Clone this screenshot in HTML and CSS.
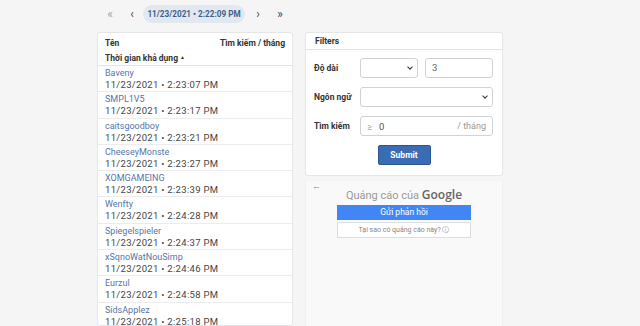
FILE: index.html
```html
<!DOCTYPE html>
<html lang="vi">
<head>
  <meta charset="UTF-8" />
  <title>Thời gian khả dụng</title>
  <link rel="stylesheet" href="styles.css">
</head>
<body>
  <nav class="pager">
    <span class="nav-arrow muted">&laquo;</span>
    <span class="nav-arrow">&lsaquo;</span>
    <span class="current">11/23/2021 • 2:22:09 PM</span>
    <span class="nav-arrow">&rsaquo;</span>
    <span class="nav-arrow">&raquo;</span>
  </nav>

  <div class="layout">
    <section class="card list">
      <div class="list-head">
        <div class="head-row">
          <span>Tên</span>
          <span>Tìm kiếm / tháng</span>
        </div>
        <div class="head-row">
          <span>Thời gian khả dụng <span class="caret">&#9650;</span></span>
        </div>
      </div>
      <div class="item"><a>Baveny</a><span>11/23/2021 • 2:23:07 PM</span></div>
      <div class="item"><a>SMPL1V5</a><span>11/23/2021 • 2:23:17 PM</span></div>
      <div class="item"><a>caitsgoodboy</a><span>11/23/2021 • 2:23:21 PM</span></div>
      <div class="item"><a>CheeseyMonste</a><span>11/23/2021 • 2:23:27 PM</span></div>
      <div class="item"><a>XOMGAMEING</a><span>11/23/2021 • 2:23:39 PM</span></div>
      <div class="item"><a>Wenfty</a><span>11/23/2021 • 2:24:28 PM</span></div>
      <div class="item"><a>Spiegelspieler</a><span>11/23/2021 • 2:24:37 PM</span></div>
      <div class="item"><a>xSqnoWatNouSimp</a><span>11/23/2021 • 2:24:46 PM</span></div>
      <div class="item"><a>Eurzul</a><span>11/23/2021 • 2:24:58 PM</span></div>
      <div class="item"><a>SidsApplez</a><span>11/23/2021 • 2:25:18 PM</span></div>
    </section>

    <aside class="side">
      <section class="card filters">
        <div class="filters-title">Filters</div>
        <div class="filters-body">
          <div class="field">
            <label>Độ dài</label>
            <div class="select short"><span class="chev"></span></div>
            <div class="input num">3</div>
          </div>
          <div class="field">
            <label>Ngôn ngữ</label>
            <div class="select wide"><span class="chev"></span></div>
          </div>
          <div class="field">
            <label>Tìm kiếm</label>
            <div class="input group">
              <span class="ge">≥</span>
              <span class="val">0</span>
              <span class="unit">/ tháng</span>
            </div>
          </div>
          <div class="actions">
            <button class="submit">Submit</button>
          </div>
        </div>
      </section>

      <section class="ad">
        <span class="back">&larr;</span>
        <div class="ad-title">Quảng cáo của <b>Google</b></div>
        <div class="ad-btn">Gửi phản hồi</div>
        <div class="ad-why">Tại sao có quảng cáo này? <span class="info">ⓘ</span></div>
      </section>
    </aside>
  </div>
</body>
</html>
```

FILE: styles.css
```css
body {
  margin: 0;
  background: #f5f5f6;
  font-family: Roboto, "Noto Sans", sans-serif;
  font-size: 10px;
  color: #222;
  height: 326px;
  overflow: hidden;
}

.pager {
  display: flex;
  align-items: center;
  height: 28px;
  padding-left: 99px;
}

.nav-arrow {
  width: 22px;
  text-align: center;
  font-size: 12px;
  color: #444;
}

.nav-arrow.muted {
  color: #9aa3b0;
}

.current {
  box-sizing: border-box;
  width: 102px;
  margin-right: 2px;
  padding: 4px 0;
  text-align: center;
  background: #e2e8f0;
  border-radius: 10px;
  color: #3f5f8a;
  font-weight: 700;
  font-size: 8.2px;
}

.layout {
  display: flex;
  gap: 12px;
  margin: 4px 0 0 97px;
  align-items: flex-start;
}

.card {
  background: #fff;
  border: 1px solid #e6e6e8;
  border-radius: 3px;
}

.list {
  width: 194px;
  height: 292px;
  overflow: hidden;
}

.list-head {
  padding: 3px 7px 1px;
  border-bottom: 1px solid #e4e4e4;
  font-weight: 700;
  font-size: 8.5px;
  color: #333;
}

.head-row {
  display: flex;
  justify-content: space-between;
  height: 14px;
  line-height: 14px;
}

.caret {
  font-size: 5px;
  vertical-align: 2px;
}

.item {
  display: flex;
  flex-direction: column;
  height: 25.3px;
  border-bottom: 1px solid #ececec;
  padding: 0 7px;
}

.item a {
  color: #5675a8;
  font-size: 9px;
  line-height: 14px;
}

.item span {
  line-height: 10px;
  font-size: 9.5px;
  letter-spacing: 0.3px;
  color: #444;
}

.side {
  width: 198px;
  display: flex;
  flex-direction: column;
  gap: 5px;
}

.filters {
  height: 142px;
}

.filters-title {
  padding: 3px 9px;
  font-weight: 700;
  font-size: 8.5px;
  color: #333;
  border-bottom: 1px solid #e4e4e4;
  height: 10px;
  line-height: 10px;
}

.filters-body {
  padding: 8px 9px 0 8px;
  display: flex;
  flex-direction: column;
  gap: 9px;
}

.field {
  display: flex;
  align-items: center;
  height: 20px;
  gap: 2px;
}

.field label {
  width: 44px;
  white-space: nowrap;
  font-size: 8.5px;
  font-weight: 700;
  color: #333;
}

.select,
.input {
  box-sizing: border-box;
  height: 20px;
  border: 1px solid #cfd3d8;
  border-radius: 3px;
  background: #fff;
  position: relative;
}

.select.short {
  width: 58px;
  margin-right: 5px;
}

.select.wide {
  flex: 1;
}

.chev {
  position: absolute;
  right: 5px;
  top: 6px;
  width: 3px;
  height: 3px;
  border-right: 1.5px solid #333;
  border-bottom: 1.5px solid #333;
  transform: rotate(45deg);
}

.input.num {
  flex: 1;
  padding-left: 6px;
  line-height: 18px;
  color: #666;
  font-size: 9.5px;
}

.input.group {
  flex: 1;
  display: flex;
  align-items: center;
  padding: 0 6px;
  color: #777;
  font-size: 9.5px;
}

.ge {
  width: 12px;
  color: #aaa;
}

.val {
  flex: 1;
  color: #555;
}

.unit {
  color: #999;
  font-size: 9px;
}

.actions {
  display: flex;
  justify-content: center;
}

.submit {
  width: 53px;
  height: 20px;
  background: #3a6cb3;
  border: 1px solid #2d5590;
  border-radius: 2px;
  color: #fff;
  font-family: Roboto, sans-serif;
  font-weight: 700;
  font-size: 8.5px;
  padding: 0;
  margin-left: 1px;
}

.ad {
  height: 146px;
  background: #f9f9f9;
  border-left: 1px solid #f0f0f0;
  border-right: 1px solid #f0f0f0;
  position: relative;
  display: flex;
  flex-direction: column;
  align-items: center;
}

.back {
  position: absolute;
  left: 6px;
  top: 0;
  font-size: 9px;
  color: #888;
}

.ad-title {
  margin-top: 5px;
  font-family: Roboto, sans-serif;
  font-size: 11px;
  color: #999;
}

.ad-title b {
  color: #666;
  font-family: "Open Sans", sans-serif;
  font-weight: 600;
  font-size: 12px;
}

.ad-btn {
  margin-top: 2px;
  width: 134px;
  height: 15px;
  line-height: 15px;
  text-align: center;
  background: #4285f4;
  color: #fff;
  font-size: 8.5px;
}

.ad-why {
  margin-top: 2px;
  box-sizing: border-box;
  width: 134px;
  height: 16px;
  line-height: 14px;
  text-align: center;
  background: #fff;
  border: 1px solid #ddd;
  color: #888;
  font-size: 7px;
}

.info {
  font-size: 6.5px;
}
```
